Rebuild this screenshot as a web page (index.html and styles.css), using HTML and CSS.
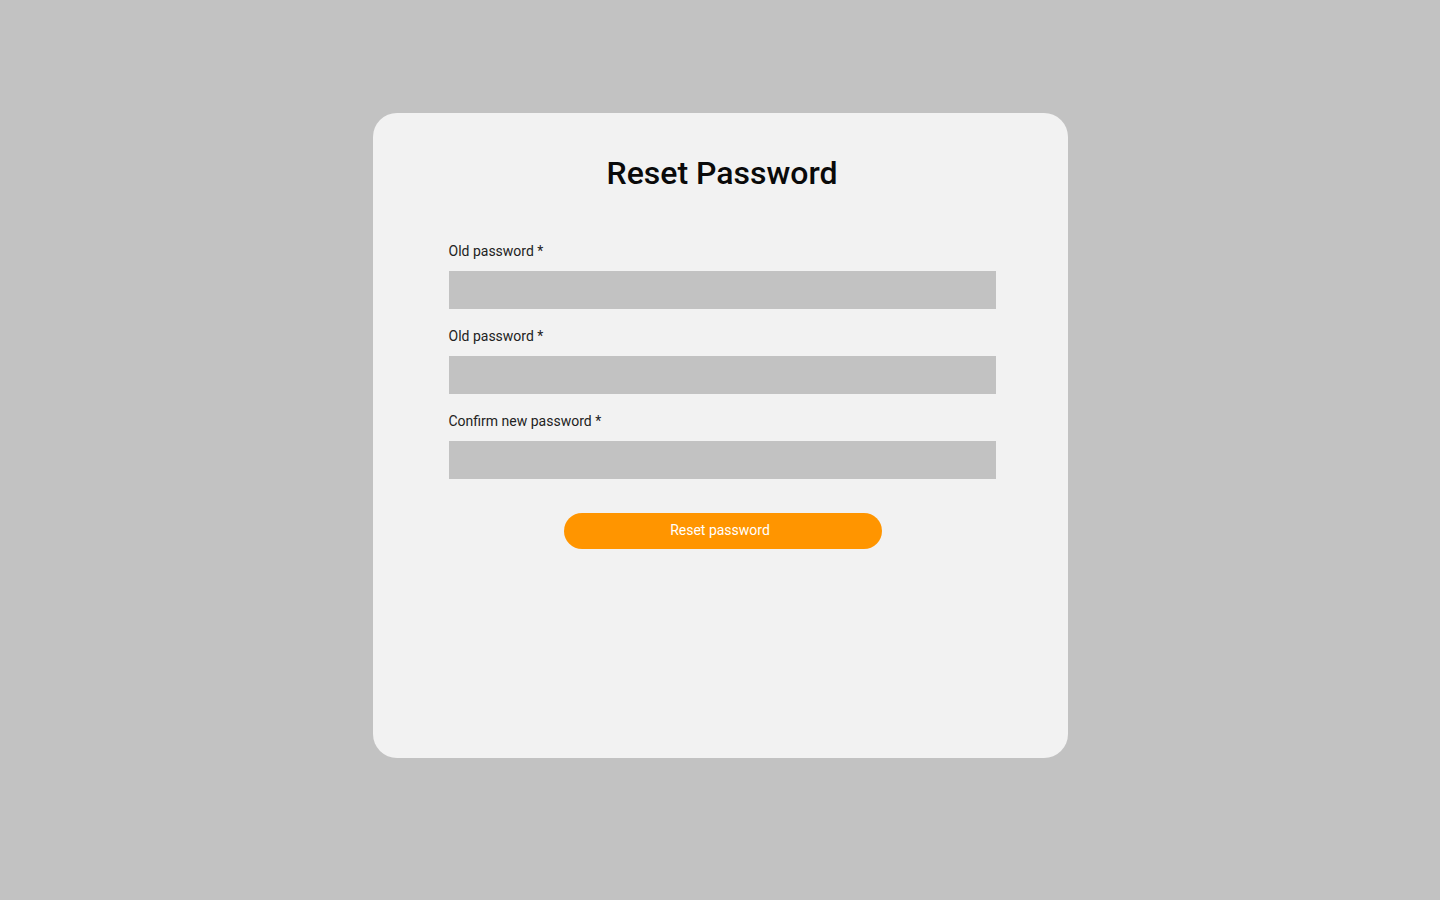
FILE: index.html
```html
<!DOCTYPE html>
<html lang="en">
<head>
<meta charset="utf-8">
<title>Reset Password</title>
<link rel="stylesheet" href="styles.css">
</head>
<body>
<main class="card">
  <h1 class="title">Reset Password</h1>
  <form class="form">
    <div class="field">
      <label class="label" for="old">Old password *</label>
      <input class="input" id="old" type="password">
    </div>
    <div class="field">
      <label class="label" for="new">Old password *</label>
      <input class="input" id="new" type="password">
    </div>
    <div class="field">
      <label class="label" for="confirm">Confirm new password *</label>
      <input class="input" id="confirm" type="password">
    </div>
    <div class="actions">
      <button class="button" type="button">Reset password</button>
    </div>
  </form>
</main>
</body>
</html>
```
FILE: styles.css
```css
* { box-sizing: border-box; }
html, body {
  margin: 0;
  padding: 0;
  background: #c2c2c2;
  font-family: Roboto, "Liberation Sans", sans-serif;
}
body {
  padding-top: 113px;
  min-height: 900px;
}
.card {
  width: 695px;
  height: 645px;
  margin: 0 auto;
  background: #f2f2f2;
  border-radius: 24px;
  padding: 42px 72px 0 76px;
}
.title {
  margin: 0;
  font-size: 32px;
  font-weight: 500;
  line-height: 37.5px;
  color: #0a0a0a;
  text-align: center;
}
.form {
  margin-top: 50px;
  display: flex;
  flex-direction: column;
}
.field {
  display: flex;
  flex-direction: column;
  margin-bottom: 19px;
}
.label {
  font-size: 14px;
  line-height: 16px;
  color: #222;
  margin-bottom: 12px;
}
.input {
  height: 38px;
  width: 100%;
  border: 0;
  background: #c2c2c2;
  border-radius: 0;
  outline: none;
}
.actions {
  display: flex;
  justify-content: center;
  margin-top: 15px;
  padding-left: 2px;
}
.button {
  width: 318px;
  height: 36px;
  border: 0;
  border-radius: 18px;
  background: #ff9500;
  color: #fff;
  font-family: Roboto, "Liberation Sans", sans-serif;
  font-size: 14px;
  font-weight: 400;
  padding: 0 6px 1px 0;
  cursor: pointer;
}
```
